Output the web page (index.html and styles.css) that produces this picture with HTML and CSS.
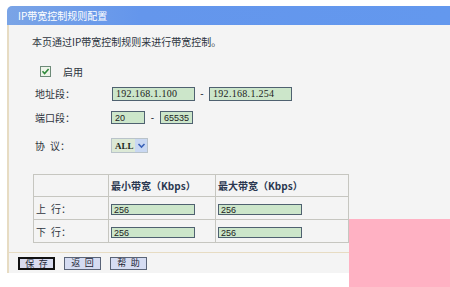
FILE: index.html
```html
<!DOCTYPE html>
<html lang="zh-CN">
  <head>
    <meta charset="UTF-8" />
    <meta name="viewport" content="width=device-width, initial-scale=1.0" />
    <title>IP带宽控制规则配置</title>
    <link rel="stylesheet" href="styles.css">
  </head>
  <body>
    <div class="window">
      <div class="title">IP带宽控制规则配置</div>
      <div class="panel">
        <p class="intro">本页通过IP带宽控制规则来进行带宽控制。</p>

        <div class="row row-check">
          <span class="checkbox">
            <svg width="11" height="11" viewBox="0 0 11 11">
              <rect x="0.5" y="0.5" width="10" height="10" fill="#eef4ea" stroke="#6d8a78" />
              <path d="M2.5 5.3 L4.6 7.5 L8.6 3" fill="none" stroke="#2f8a3a" stroke-width="1.6" />
            </svg>
          </span>
          <span class="check-label">启用</span>
        </div>

        <div class="row row-addr">
          <span class="label">地址段：</span>
          <input class="field field-ip" type="text" value="192.168.1.100" />
          <span class="dash">-</span>
          <input class="field field-ip" type="text" value="192.168.1.254" />
        </div>

        <div class="row row-port">
          <span class="label">端口段：</span>
          <input class="field field-port" type="text" value="20" />
          <span class="dash">-</span>
          <input class="field field-port" type="text" value="65535" />
        </div>

        <div class="row row-proto">
          <span class="label">协&ensp;议：</span>
          <div class="select">
            <span class="select-text">ALL</span>
            <span class="select-btn">
              <svg width="9" height="7" viewBox="0 0 9 7">
                <path d="M1.5 2 L4.5 5 L7.5 2" fill="none" stroke="#3a62b8" stroke-width="1.6" />
              </svg>
            </span>
          </div>
        </div>

        <table class="bw-table">
          <tr class="head">
            <th class="col-name"></th>
            <th class="col-min">最小带宽（Kbps）</th>
            <th class="col-max">最大带宽（Kbps）</th>
          </tr>
          <tr>
            <td>上&ensp;行：</td>
            <td><input class="field field-bw" type="text" value="256" /></td>
            <td><input class="field field-bw" type="text" value="256" /></td>
          </tr>
          <tr>
            <td>下&ensp;行：</td>
            <td><input class="field field-bw" type="text" value="256" /></td>
            <td><input class="field field-bw" type="text" value="256" /></td>
          </tr>
        </table>

        <div class="actions">
          <button class="btn btn-focus">保&ensp;存</button>
          <button class="btn">返&ensp;回</button>
          <button class="btn">帮&ensp;助</button>
        </div>
      </div>
    </div>
    <div class="corner"></div>
  </body>
</html>
```

FILE: styles.css
```css
body {
  margin: 0;
  background: #fff;
  font-family: "Noto Sans CJK SC", "Liberation Sans", sans-serif;
  font-size: 10px;
  color: #2e3440;
}
.window {
  margin: 6px 0 0 7px;
}
.title {
  height: 19px;
  line-height: 19px;
  padding-left: 11px;
  color: #fff;
  background: linear-gradient(to right, #7aa4e6, #6496ec 30%, #6398ee);
  border-top-left-radius: 5px;
  font-size: 10px;
}
.panel {
  background: #f4f4f4;
  border-left: 2px solid #e7dcc3;
  height: 248px;
  box-sizing: border-box;
}
.intro {
  margin: 0;
  padding: 11px 0 0 23px;
  height: 12px;
  line-height: 12px;
  font-size: 10px;
}
.row {
  display: flex;
  align-items: center;
}
.row-check {
  margin-top: 17px;
  height: 13px;
  padding-left: 31px;
}
.checkbox {
  width: 11px;
  height: 11px;
  display: flex;
}
.check-label {
  margin-left: 12px;
}
.label {
  width: 77px;
  padding-left: 26px;
  flex-shrink: 0;
}
.row-addr {
  margin-top: 8px;
  height: 15px;
}
.row-port {
  margin-top: 10px;
  height: 13px;
}
.row-port .label {
  width: 76px;
}
.row-proto {
  margin-top: 14px;
  height: 15px;
}
.row-proto .label {
  width: 76px;
}
.field {
  box-sizing: border-box;
  height: 14px;
  padding: 0 3px;
  margin: 0;
  border: 1px solid #4f6170;
  background: #cce6ca;
  font-size: 9px;
  color: #222;
  outline: none;
}
.field-ip {
  width: 83px;
  font-family: "Liberation Serif", serif;
  font-size: 10px;
  letter-spacing: 0.3px;
}
.field-port {
  width: 34px;
  height: 13px;
  font-family: "Liberation Sans", sans-serif;
  font-size: 9px;
}
.row-port .field-port:last-child {
  width: 33px;
}
.dash {
  width: 14px;
  text-align: center;
  font-family: "Liberation Sans", sans-serif;
}
.row-port .dash {
  width: 15px;
}
.select {
  display: flex;
  align-items: center;
  width: 37px;
  height: 15px;
  box-sizing: border-box;
  border: 1px solid #b9c3c9;
  background: #dce9d6;
}
.select-text {
  flex: 1;
  padding-left: 3px;
  font-family: "Liberation Serif", serif;
  font-weight: bold;
  font-size: 9px;
  color: #1d2a1d;
}
.select-btn {
  width: 12px;
  height: 13px;
  background: #c9d8f2;
  display: flex;
  align-items: center;
  justify-content: center;
}
.bw-table {
  margin: 21px 0 0 24px;
  border-collapse: collapse;
  width: 316px;
}
.bw-table th,
.bw-table td {
  border: 1px solid #c6c6c0;
  padding: 0 0 0 2px;
  text-align: left;
  font-weight: normal;
}
.bw-table .head th {
  height: 21px;
  font-weight: bold;
  color: #2a3750;
}
.bw-table td {
  height: 22px;
}
.col-name {
  width: 72px;
}
.col-min {
  width: 104px;
}
.field-bw {
  width: 84px;
  height: 11px;
  font-family: "Liberation Sans", sans-serif;
  font-size: 9px;
  padding: 0 2px;
  line-height: 9px;
}
.actions {
  margin-top: 9px;
  height: 22px;
  box-sizing: border-box;
  border-top: 1px solid #e7dcc3;
  border-bottom: 1px solid #e7dcc3;
  display: flex;
  align-items: center;
  gap: 9px;
  padding-left: 9px;
}
.btn {
  width: 37px;
  height: 13px;
  padding: 0;
  box-sizing: border-box;
  border: 1px solid #5a6478;
  background: #d5dcf2;
  font-family: "Noto Sans CJK SC", sans-serif;
  font-size: 9px;
  line-height: 10px;
  color: #1c2433;
}
.btn-focus {
  border: 2px solid #111;
  background: #d9dcef;
}
.corner {
  position: absolute;
  left: 349px;
  top: 219px;
  width: 101px;
  height: 68px;
  background: #ffb1c3;
}
```
